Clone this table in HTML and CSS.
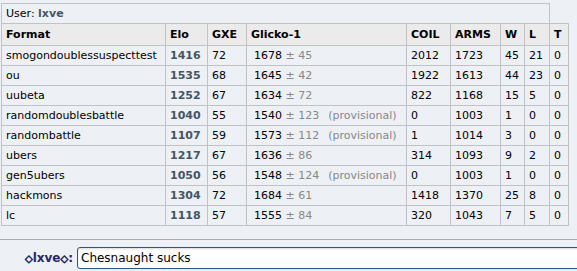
FILE: index.html
```html
<!DOCTYPE html>
<html>
<head>
<meta charset="utf-8">
<link rel="stylesheet" href="styles.css">
</head>
<body>
<div class="page">
  <div class="log">
    <table class="ladder">
      <colgroup>
        <col class="c-format"><col class="c-elo"><col class="c-gxe"><col class="c-glicko"><col class="c-coil"><col class="c-arms"><col class="c-w"><col class="c-l"><col class="c-t">
      </colgroup>
      <tr class="user-row"><td colspan="8">User: <strong class="uname">lxve</strong></td></tr>
      <tr class="head"><th>Format</th><th>Elo</th><th>GXE</th><th>Glicko-1</th><th>COIL</th><th>ARMS</th><th>W</th><th>L</th><th>T</th></tr>
      <tr><td>smogondoublessuspecttest</td><td class="elo">1416</td><td>72</td><td class="gl">1678 <span class="dim">± 45</span></td><td>2012</td><td>1723</td><td>45</td><td>21</td><td>0</td></tr>
      <tr><td>ou</td><td class="elo">1535</td><td>68</td><td class="gl">1645 <span class="dim">± 42</span></td><td>1922</td><td>1613</td><td>44</td><td>23</td><td>0</td></tr>
      <tr><td>uubeta</td><td class="elo">1252</td><td>67</td><td class="gl">1634 <span class="dim">± 72</span></td><td>822</td><td>1168</td><td>15</td><td>5</td><td>0</td></tr>
      <tr><td>randomdoublesbattle</td><td class="elo">1040</td><td>55</td><td class="gl">1540 <span class="dim">± 123</span><span class="dim prov">(provisional)</span></td><td>0</td><td>1003</td><td>1</td><td>0</td><td>0</td></tr>
      <tr><td>randombattle</td><td class="elo">1107</td><td>59</td><td class="gl">1573 <span class="dim">± 112</span><span class="dim prov">(provisional)</span></td><td>1</td><td>1014</td><td>3</td><td>0</td><td>0</td></tr>
      <tr><td>ubers</td><td class="elo">1217</td><td>67</td><td class="gl">1636 <span class="dim">± 86</span></td><td>314</td><td>1093</td><td>9</td><td>2</td><td>0</td></tr>
      <tr><td>gen5ubers</td><td class="elo">1050</td><td>56</td><td class="gl">1548 <span class="dim">± 124</span><span class="dim prov">(provisional)</span></td><td>0</td><td>1003</td><td>1</td><td>0</td><td>0</td></tr>
      <tr><td>hackmons</td><td class="elo">1304</td><td>72</td><td class="gl">1684 <span class="dim">± 61</span></td><td>1418</td><td>1370</td><td>25</td><td>8</td><td>0</td></tr>
      <tr><td>lc</td><td class="elo">1118</td><td>57</td><td class="gl">1555 <span class="dim">± 84</span></td><td>320</td><td>1043</td><td>7</td><td>5</td><td>0</td></tr>
    </table>
  </div>
  <form class="chatbar">
    <label class="me"><span class="gem">◇</span>lxve<span class="gem">◇</span>:</label>
    <input class="msg" type="text" value="Chesnaught sucks">
  </form>
</div>
</body>
</html>
```
FILE: styles.css
```css
html, body {
  margin: 0;
  padding: 0;
  background: #edf1f5;
  overflow: hidden;
}
.page {
  width: 577px;
  height: 271px;
  font-family: "DejaVu Sans", Verdana, sans-serif;
  font-size: 11px;
  color: #000;
}
.log {
  padding: 3px 0 0 1px;
  height: 240px;
  box-sizing: border-box;
  border-bottom: 1px solid #a9adb2;
}
.ladder {
  border-collapse: collapse;
  table-layout: fixed;
  width: 568px;
}
.c-format { width: 164px; }
.c-elo { width: 42px; }
.c-gxe { width: 39px; }
.c-glicko { width: 160px; }
.c-coil { width: 44px; }
.c-arms { width: 50px; }
.c-w { width: 24px; }
.c-l { width: 25px; }
.c-t { width: 19px; }
.ladder td, .ladder th {
  border: 1px solid #c2c2c2;
  padding: 0 4px;
  height: 19px;
  line-height: 13px;
  text-align: left;
  white-space: nowrap;
  overflow: hidden;
}
.ladder th {
  background: #ebebeb;
  font-weight: bold;
  height: 21px;
}
.user-row td {
  height: 19px;
}
.uname {
  color: #445566;
}
.ladder td.elo {
  font-weight: bold;
  color: #445566;
}
.ladder td.gl {
  padding-left: 7px;
}
.dim {
  color: #888;
}
.prov {
  margin-left: 9px;
}
.chatbar {
  margin: 0;
  padding: 7px 0 0 0;
  display: flex;
  align-items: center;
}
.me {
  width: 73px;
  padding-right: 4px;
  text-align: right;
  font-weight: bold;
  font-size: 12px;
  color: #22296a;
}
.gem {
  font-size: 10px;
  font-weight: bold;
  -webkit-text-stroke: 0.7px #22296a;
}
.msg {
  flex: 1;
  margin-right: -20px;
  height: 22px;
  box-sizing: border-box;
  border: 1px solid #1d5b97;
  border-radius: 3px;
  padding: 1px 3px;
  font-family: "DejaVu Sans", Verdana, sans-serif;
  font-size: 12px;
  color: #000;
  background: #fff;
  box-shadow: inset 0 1px 2px rgba(0,0,0,0.15);
  outline: none;
}
```
